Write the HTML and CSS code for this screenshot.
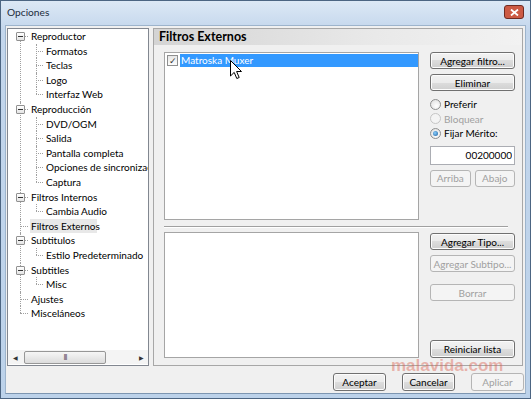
FILE: index.html
```html
<!DOCTYPE html>
<html lang="es">
<head>
    <meta charset="UTF-8" />
    <title>Opciones</title>
    <link rel="stylesheet" href="styles.css">
</head>
<body>
<div class="window">
    <div class="titlebar">
        <span class="title">Opciones</span>
        <div class="close-btn">
            <svg width="9" height="7" viewBox="0 0 9 7">
                <path d="M1 0.5 L8 6.5 M8 0.5 L1 6.5" stroke="#ffffff" stroke-width="1.8"/>
            </svg>
        </div>
    </div>
    <div class="client">
        <div class="main">
            <!-- arbol de secciones -->
            <div class="tree">
                <ul class="tree-body">
                    <li class="open first"><span class="toggle"></span><span class="label">Reproductor</span>
                        <ul>
                            <li><span class="label">Formatos</span></li>
                            <li><span class="label">Teclas</span></li>
                            <li><span class="label">Logo</span></li>
                            <li><span class="label">Interfaz Web</span></li>
                        </ul>
                    </li>
                    <li class="open"><span class="toggle"></span><span class="label">Reproducción</span>
                        <ul>
                            <li><span class="label">DVD/OGM</span></li>
                            <li><span class="label">Salida</span></li>
                            <li><span class="label">Pantalla completa</span></li>
                            <li><span class="label">Opciones de sincronización</span></li>
                            <li><span class="label">Captura</span></li>
                        </ul>
                    </li>
                    <li class="open"><span class="toggle"></span><span class="label">Filtros Internos</span>
                        <ul>
                            <li><span class="label">Cambia Audio</span></li>
                        </ul>
                    </li>
                    <li><span class="label selected">Filtros Externos</span></li>
                    <li class="open"><span class="toggle"></span><span class="label">Subtitulos</span>
                        <ul>
                            <li><span class="label">Estilo Predeterminado</span></li>
                        </ul>
                    </li>
                    <li class="open"><span class="toggle"></span><span class="label">Subtitles</span>
                        <ul>
                            <li><span class="label">Misc</span></li>
                        </ul>
                    </li>
                    <li><span class="label">Ajustes</span></li>
                    <li><span class="label">Misceláneos</span></li>
                </ul>
                <div class="hscroll">
                    <span class="arrow">&#9664;</span>
                    <span class="thumb">III</span>
                    <span class="arrow right">&#9654;</span>
                </div>
            </div>

            <div class="page">
                <div class="page-header">Filtros Externos</div>
                <div class="page-body">
                    <div class="section">
                        <div class="listbox filters">
                            <div class="filter-row">
                                <span class="checkbox">&#10003;</span>
                                <span class="filter-name">Matroska Muxer</span>
                            </div>
                            <svg class="cursor" width="13" height="20" viewBox="0 0 13 20">
                                <path d="M0.5 0.5 L0.5 16 L4.2 12.4 L6.8 18.5 L9.2 17.5 L6.6 11.5 L11.5 11.5 Z" fill="#fff" stroke="#000" stroke-width="1"/>
                            </svg>
                        </div>
                        <div class="side">
                            <button class="btn">Agregar filtro...</button>
                            <button class="btn">Eliminar</button>
                            <div class="radios">
                                <label class="radio"><span class="dot"></span>Preferir</label>
                                <label class="radio disabled"><span class="dot"></span>Bloquear</label>
                                <label class="radio checked"><span class="dot"></span>Fijar Mérito:</label>
                            </div>
                            <input class="merit" type="text" value="00200000" />
                            <div class="btn-pair">
                                <button class="btn" disabled>Arriba</button>
                                <button class="btn" disabled>Abajo</button>
                            </div>
                        </div>
                    </div>
                    <div class="separator"></div>
                    <div class="section lower">
                        <div class="listbox types"></div>
                        <div class="side">
                            <button class="btn">Agregar Tipo...</button>
                            <button class="btn" disabled>Agregar Subtipo...</button>
                            <button class="btn borrar" disabled>Borrar</button>
                            <button class="btn reset">Reiniciar lista</button>
                        </div>
                    </div>
                </div>
            </div>
        </div>
        <div class="footer">
            <span class="watermark">malavida.com</span>
            <button class="btn">Aceptar</button>
            <button class="btn">Cancelar</button>
            <button class="btn" disabled>Aplicar</button>
        </div>
    </div>
</div>
</body>
</html>
```

FILE: styles.css
```css
* {
    box-sizing: border-box;
}

body {
    margin: 0;
    padding: 0;
    font-family: 'Lato', 'Noto Sans', sans-serif;
    font-size: 10px;
    color: #000;
}

.window {
    width: 531px;
    height: 399px;
    border: 1px solid #4c6582;
    background: linear-gradient(#dce8f5, #c3d6ec 30px, #bcd2ea);
    padding: 0 4px 4px 4px;
    display: flex;
    flex-direction: column;
}

.titlebar {
    height: 24px;
    display: flex;
    align-items: center;
    justify-content: space-between;
    padding: 0 2px 2px 2px;
}

.title {
    font-size: 10.2px;
    color: #1b2a3a;
}

.close-btn {
    width: 20px;
    height: 14px;
    border: 1px solid #6f2b22;
    border-radius: 3px;
    background-color: #cc5a44;
    display: flex;
    align-items: center;
    justify-content: center;
}

.close-btn svg {
    display: block;
}

.client {
    flex: 1;
    background-color: #f0f0f0;
    border: 1px solid #9db4cc;
    border-bottom-color: #7d96b1;
    padding: 2px 1px 2px 1px;
    display: flex;
    flex-direction: column;
}

.main {
    height: 338px;
    display: flex;
    gap: 4px;
}

/* arbol */

.tree {
    width: 142px;
    border: 1px solid #828790;
    background-color: #fff;
    display: flex;
    flex-direction: column;
    overflow: hidden;
}

.tree-body {
    flex: 1;
    list-style: none;
    margin: 0;
    padding: 0;
    overflow: hidden;
}

.tree-body ul {
    list-style: none;
    margin: 0;
    padding: 0;
}

.tree-body li {
    position: relative;
    white-space: nowrap;
}

.tree-body > li {
    padding-left: 22px;
}

.tree-body > li::before {
    content: '';
    position: absolute;
    left: 12px;
    top: 0;
    bottom: 0;
    border-left: 1px dotted #a0a0a0;
}

.tree-body > li.first::before {
    top: 7px;
}

.tree-body > li:last-child::before {
    height: 7px;
}

.tree-body > li::after {
    content: '';
    position: absolute;
    left: 12px;
    top: 7px;
    width: 8px;
    border-top: 1px dotted #a0a0a0;
}

.tree-body ul li {
    padding-left: 15px;
}

.tree-body ul li::before {
    content: '';
    position: absolute;
    left: 6px;
    top: 0;
    bottom: 0;
    border-left: 1px dotted #a0a0a0;
}

.tree-body ul li:last-child::before {
    height: 7px;
}

.tree-body ul li::after {
    content: '';
    position: absolute;
    left: 6px;
    top: 7px;
    width: 7px;
    border-top: 1px dotted #a0a0a0;
}

.label {
    display: inline-block;
    height: 14.6px;
    line-height: 14.6px;
    padding: 0 1px;
    font-size: 10px;
}

.label.selected {
    background-color: #e8e8e8;
    width: 67px;
}

.toggle {
    position: absolute;
    left: 8px;
    top: 3px;
    width: 9px;
    height: 9px;
    border: 1px solid #919191;
    border-radius: 1px;
    background: linear-gradient(#fff, #e4e4e4);
    z-index: 1;
}

.toggle::after {
    content: '';
    position: absolute;
    left: 1px;
    top: 3px;
    width: 5px;
    border-top: 1px solid #333;
}

.hscroll {
    height: 14px;
    margin-bottom: 1px;
    display: flex;
    align-items: center;
    background-color: #f4f4f4;
    color: #333;
}

.hscroll .arrow {
    width: 14px;
    text-align: center;
    font-size: 6px;
}

.hscroll .thumb {
    width: 82px;
    height: 13px;
    margin-left: 2px;
    border: 1px solid #979797;
    border-radius: 2px;
    background: linear-gradient(#f6f6f6, #dcdcdc);
    text-align: center;
    font-size: 7px;
    line-height: 11px;
    letter-spacing: -1px;
    color: #555;
}

.hscroll .arrow.right {
    margin-left: auto;
}

/* pagina */

.page {
    width: 370px;
    border: 1px solid #a7a7a7;
    display: flex;
    flex-direction: column;
}

.page-header {
    height: 16px;
    line-height: 16px;
    padding-left: 5px;
    font-size: 12.5px;
    font-weight: bold;
    background: linear-gradient(to right, #d4d4d4, #e9e9e9 60%, #f2f2f2);
}

.page-body {
    flex: 1;
    padding: 7px 7px 8px 10px;
    display: flex;
    flex-direction: column;
}

.section {
    display: flex;
    gap: 11px;
    height: 168px;
}

.section.lower {
    height: 126px;
}

.listbox {
    width: 255px;
    border: 1px solid #a5a5a5;
    background-color: #fff;
    position: relative;
}

.filter-row {
    display: flex;
    align-items: center;
    height: 14px;
    padding-left: 2px;
}

.checkbox {
    width: 11px;
    height: 11px;
    border: 1px solid #8e8f8f;
    background: linear-gradient(#e6e6e6, #fdfdfd);
    font-size: 9px;
    line-height: 9px;
    text-align: center;
    color: #333;
    margin-right: 2px;
}

.filter-name {
    flex: 1;
    height: 13px;
    line-height: 13px;
    background-color: #3399ff;
    color: #fff;
    padding-left: 1px;
}

.cursor {
    position: absolute;
    left: 65px;
    top: 7px;
}

.side {
    width: 85px;
    display: flex;
    flex-direction: column;
}

.btn {
    height: 17px;
    padding: 0;
    font-family: inherit;
    font-size: 10px;
    color: #000;
    white-space: nowrap;
    border: 1px solid #707070;
    border-radius: 3px;
    background: linear-gradient(#f2f2f2, #ebebeb 50%, #dddddd 50%, #cfcfcf);
    box-shadow: inset 0 0 0 1px #fcfcfc;
    margin-bottom: 5px;
}

.btn:disabled {
    color: #a0a0a0;
    border-color: #b5b5b5;
    background: #f4f4f4;
    box-shadow: none;
}

.radios {
    margin-top: 1px;
    display: flex;
    flex-direction: column;
}

.radio {
    height: 14.5px;
    display: flex;
    align-items: center;
    gap: 3px;
}

.radio .dot {
    width: 11px;
    height: 11px;
    border: 1px solid #8e8f8f;
    border-radius: 50%;
    background: radial-gradient(circle at 60% 65%, #fff, #dcdcdc);
    display: flex;
    align-items: center;
    justify-content: center;
}

.radio.disabled {
    color: #a0a0a0;
}

.radio.disabled .dot {
    border-color: #c5c5c5;
    background: #f4f4f4;
}

.radio.checked .dot::after {
    content: '';
    width: 5px;
    height: 5px;
    border-radius: 50%;
    background: radial-gradient(circle at 40% 40%, #8ad0ff, #1b5b9a);
}

.merit {
    height: 19px;
    margin-top: 5px;
    margin-bottom: 5px;
    border: 1px solid #abadb3;
    text-align: right;
    font-family: inherit;
    font-size: 10px;
    padding: 0 2px;
    background-color: #fff;
}

.btn-pair {
    display: flex;
    gap: 4px;
}

.btn-pair .btn {
    flex: 1;
}

.separator {
    margin: 6px 7px 4px 0;
    border-top: 1px solid #a0a0a0;
    border-bottom: 1px solid #fff;
}

.section.lower .side .btn:first-child {
    margin-top: 1px;
}

.borrar {
    margin-top: 7px;
}

.reset {
    margin-top: auto;
    height: 18px;
    margin-bottom: 0 !important;
}

/* botones de abajo */

.footer {
    margin-top: 7px;
    display: flex;
    justify-content: flex-end;
    gap: 16px;
    position: relative;
}

.footer .btn {
    width: 53px;
    height: 18px;
    margin: 0;
}

.watermark {
    position: absolute;
    left: 384px;
    top: -17px;
    font-family: 'Liberation Sans', sans-serif;
    font-size: 17px;
    font-weight: bold;
    color: rgba(220, 100, 80, 0.45);
}
```
